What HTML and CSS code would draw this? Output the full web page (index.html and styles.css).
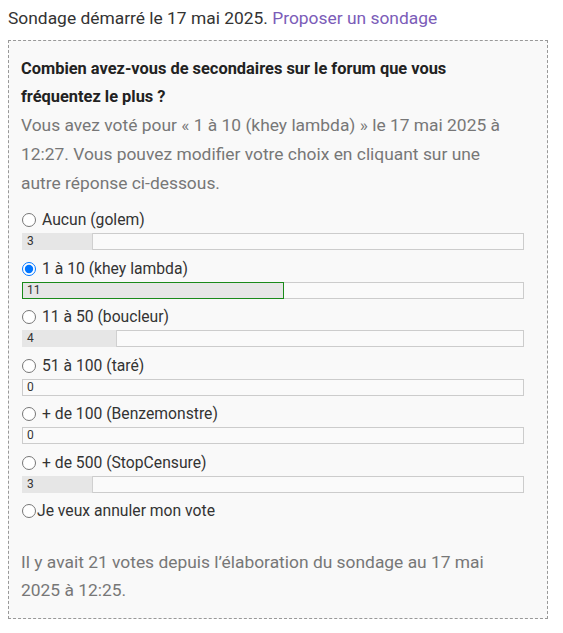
FILE: index.html
```html
<!DOCTYPE html>
<html lang="fr">
<head>
<meta charset="utf-8">
<link rel="stylesheet" href="styles.css">
</head>
<body>
<p class="intro">Sondage démarré le 17 mai 2025. <a href="#" class="link">Proposer un sondage</a></p>
<form class="poll">
  <h2 class="question">Combien avez-vous de secondaires sur le forum que vous fréquentez le plus ?</h2>
  <p class="note">Vous avez voté pour « 1 à 10 (khey lambda) » le 17 mai 2025 à 12:27. Vous pouvez modifier votre choix en cliquant sur une autre réponse ci-dessous.</p>
  <ul class="options">
    <li class="option">
      <label class="choice"><input type="radio" name="v"> Aucun (golem)</label>
      <div class="bar"><div class="fill" style="width:14.29%"></div><span class="count">3</span></div>
    </li>
    <li class="option">
      <label class="choice"><input type="radio" name="v" checked> 1 à 10 (khey lambda)</label>
      <div class="bar"><div class="fill mine" style="width:52.38%"></div><span class="count">11</span></div>
    </li>
    <li class="option">
      <label class="choice"><input type="radio" name="v"> 11 à 50 (boucleur)</label>
      <div class="bar"><div class="fill" style="width:19.05%"></div><span class="count">4</span></div>
    </li>
    <li class="option">
      <label class="choice"><input type="radio" name="v"> 51 à 100 (taré)</label>
      <div class="bar"><span class="count">0</span></div>
    </li>
    <li class="option">
      <label class="choice"><input type="radio" name="v"> + de 100 (Benzemonstre)</label>
      <div class="bar"><span class="count">0</span></div>
    </li>
    <li class="option">
      <label class="choice"><input type="radio" name="v"> + de 500 (StopCensure)</label>
      <div class="bar"><div class="fill" style="width:14.29%"></div><span class="count">3</span></div>
    </li>
    <li class="option">
      <label class="choice tight"><input type="radio" name="v">Je veux annuler mon vote</label>
    </li>
  </ul>
  <p class="footer">Il y avait 21 votes depuis l’élaboration du sondage au 17 mai 2025 à 12:25.</p>
</form>
</body>
</html>
```
FILE: styles.css
```css
* { box-sizing: border-box; }
html, body { background: #fff; }
body {
  margin: 0;
  padding: 0 15px 0 8px;
  font-family: Roboto, "Liberation Sans", sans-serif;
  font-size: 17.4px;
  color: #333;
}
.intro {
  margin: 0;
  padding-top: 5px;
  line-height: 26px;
  height: 40px;
}
.link { color: #7b5cb8; text-decoration: none; }
.poll {
  border: 1px dashed #999;
  background: #f9f9f9;
  padding: 14px 23px 14px 12px;
}
.question {
  margin: 0;
  font-size: 16.4px;
  font-weight: 700;
  line-height: 28px;
  color: #222;
}
.note {
  margin: 0;
  line-height: 29px;
  color: #777;
}
.options {
  list-style: none;
  margin: 9px 0 0;
  padding: 0;
}
.option { height: 48.5px; }
.option:last-child { height: 28px; }
.choice {
  display: flex;
  align-items: center;
  gap: 6px;
  height: 26px;
  line-height: 26px;
  font-size: 15.7px;
  color: #333;
}
.choice.tight { gap: 1px; }
.choice input {
  margin: 0 0 0 1px;
  width: 14px;
  height: 14px;
}
.bar {
  position: relative;
  margin-left: 1px;
  height: 17px;
  border: 1px solid #ccc;
  background: #fafafa;
}
.fill {
  position: absolute;
  left: -1px;
  top: -1px;
  bottom: -1px;
  background: #e6e6e6;
  border-right: 1px solid #d0d0d0;
}
.fill.mine { border: 1px solid #1a8a1a; }
.count {
  position: relative;
  display: block;
  padding-left: 4px;
  font-size: 12px;
  line-height: 15px;
  color: #333;
}
.footer {
  margin: 22px 0 0;
  line-height: 28px;
  color: #777;
}
```
